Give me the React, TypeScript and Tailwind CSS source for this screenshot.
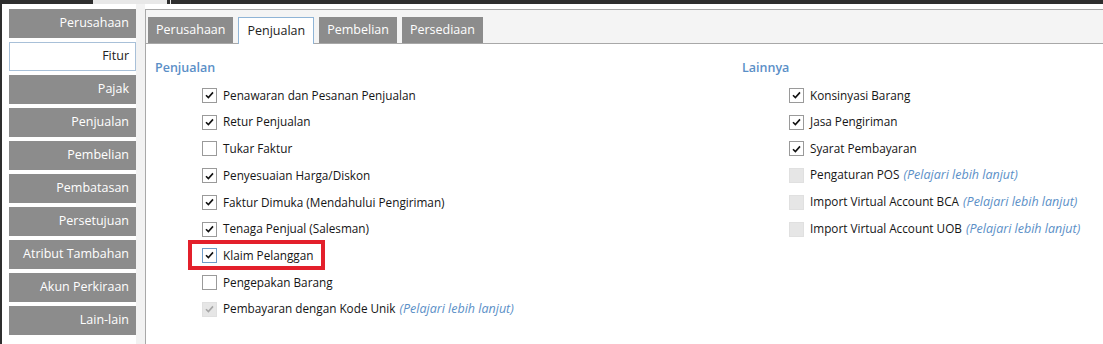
import type { ReactNode } from "react";

const sideItems = [
  "Perusahaan",
  "Fitur",
  "Pajak",
  "Penjualan",
  "Pembelian",
  "Pembatasan",
  "Persetujuan",
  "Atribut Tambahan",
  "Akun Perkiraan",
  "Lain-lain",
];

const tabs = ["Perusahaan", "Penjualan", "Pembelian", "Persediaan"];

type Item = {
  label: string;
  checked: boolean;
  disabled?: boolean;
  link?: boolean;
  focus?: boolean;
};

const penjualan: Item[] = [
  { label: "Penawaran dan Pesanan Penjualan", checked: true },
  { label: "Retur Penjualan", checked: true },
  { label: "Tukar Faktur", checked: false },
  { label: "Penyesuaian Harga/Diskon", checked: true },
  { label: "Faktur Dimuka (Mendahului Pengiriman)", checked: true },
  { label: "Tenaga Penjual (Salesman)", checked: true },
  { label: "Klaim Pelanggan", checked: true, focus: true },
  { label: "Pengepakan Barang", checked: false },
  { label: "Pembayaran dengan Kode Unik", checked: true, disabled: true, link: true },
];

const lainnya: Item[] = [
  { label: "Konsinyasi Barang", checked: true },
  { label: "Jasa Pengiriman", checked: true },
  { label: "Syarat Pembayaran", checked: true },
  { label: "Pengaturan POS", checked: false, disabled: true, link: true },
  { label: "Import Virtual Account BCA", checked: false, disabled: true, link: true },
  { label: "Import Virtual Account UOB", checked: false, disabled: true, link: true },
];

function Check({ item }: { item: Item }) {
  const box = item.disabled
    ? "bg-[#e6e6e6] border-[#e0e0e0]"
    : item.focus
      ? "bg-white border-[#6f9cc9]"
      : "bg-white border-[#9a9a9a]";
  return (
    <span className={`flex h-[15px] w-[15px] shrink-0 items-center justify-center border ${box}`}>
      {item.checked && (
        <svg width="9" height="8" viewBox="0 0 9 8">
          <path
            d="M1 4.2 L3.4 6.6 L8 1.4"
            fill="none"
            stroke={item.disabled ? "#a6a6a6" : "#111"}
            strokeWidth="1.6"
          />
        </svg>
      )}
    </span>
  );
}

function Row({ item }: { item: Item }) {
  const inner: ReactNode = (
    <div className="flex items-center gap-[6px]">
      <Check item={item} />
      <span className="whitespace-nowrap text-[#151515]">
        {item.label}
        {item.link && (
          <span className="ml-[4px] text-[12.5px] italic text-[#5b8fc7]">(Pelajari lebih lanjut)</span>
        )}
      </span>
    </div>
  );
  return (
    <div className="flex h-[26.75px] items-center">
      {item.focus ? (
        <div className="-ml-[14px] -mt-[1px] flex h-[30px] items-center border-[4px] border-[#e3202b] pl-[10px] pr-[8px]">
          {inner}
        </div>
      ) : (
        inner
      )}
    </div>
  );
}

function Column({ title, items, width }: { title: string; items: Item[]; width: string }) {
  return (
    <div className={width}>
      <div className="h-[18px] text-[12.5px] font-semibold leading-[18px] text-[#5b8fc7]">{title}</div>
      <div className="mt-[5px] pl-[47px]">
        {items.map((it) => (
          <Row key={it.label} item={it} />
        ))}
      </div>
    </div>
  );
}

export default function App() {
  return (
    <div
      className="flex h-[344px] w-[1103px] flex-col overflow-hidden bg-white text-[11.75px]"
      style={{ fontFamily: '"Open Sans", "Noto Sans", sans-serif' }}
    >
      <div className="flex h-[4px] shrink-0 bg-[#2e2e2e]">
        <div className="w-[93px]" />
        <div className="w-[74px] bg-[#e8e8e8]" />
        <div className="w-[3px]" />
        <div className="w-[1px] bg-[#e8e8e8]" />
      </div>
      <div className="flex flex-1">
        <div className="w-[2px] bg-[#2e2e2e]" />
        <div className="flex w-[134px] flex-col gap-[4px] pl-[7px] pt-[5px]">
          {sideItems.map((s) =>
            s === "Fitur" ? (
              <div
                key={s}
                className="flex h-[29px] items-center justify-end border border-[#a8c0d8] bg-white pr-[6px] text-[12.5px] text-[#222]"
              >
                {s}
              </div>
            ) : (
              <div
                key={s}
                className="flex h-[29px] items-center justify-end bg-[#8c8c8c] pr-[7px] text-[12.5px] text-white"
              >
                {s}
              </div>
            ),
          )}
        </div>
        <div className="w-[9px] bg-[#f2f2f2]" />
        <div className="mt-[5px] flex flex-1 flex-col border-l border-[#a8a8a8]">
          <div className="flex h-[35px] items-end gap-[5px] border-y border-[#a8a8a8] bg-[#f4f4f4] pl-[2px]">
            {tabs.map((t) =>
              t === "Penjualan" ? (
                <div
                  key={t}
                  className="relative -mb-[1px] flex h-[27px] items-center border border-b-0 border-[#8fb4d6] bg-white px-[8px] text-[12.5px] text-[#222]"
                >
                  {t}
                </div>
              ) : (
                <div
                  key={t}
                  className="flex h-[26px] items-center bg-[#8c8c8c] px-[8px] text-[12.5px] text-white"
                >
                  {t}
                </div>
              ),
            )}
          </div>
          <div className="flex pl-[9px] pt-[15px]">
            <Column title="Penjualan" items={penjualan} width="w-[587px]" />
            <Column title="Lainnya" items={lainnya} width="w-[360px]" />
          </div>
        </div>
      </div>
    </div>
  );
}
